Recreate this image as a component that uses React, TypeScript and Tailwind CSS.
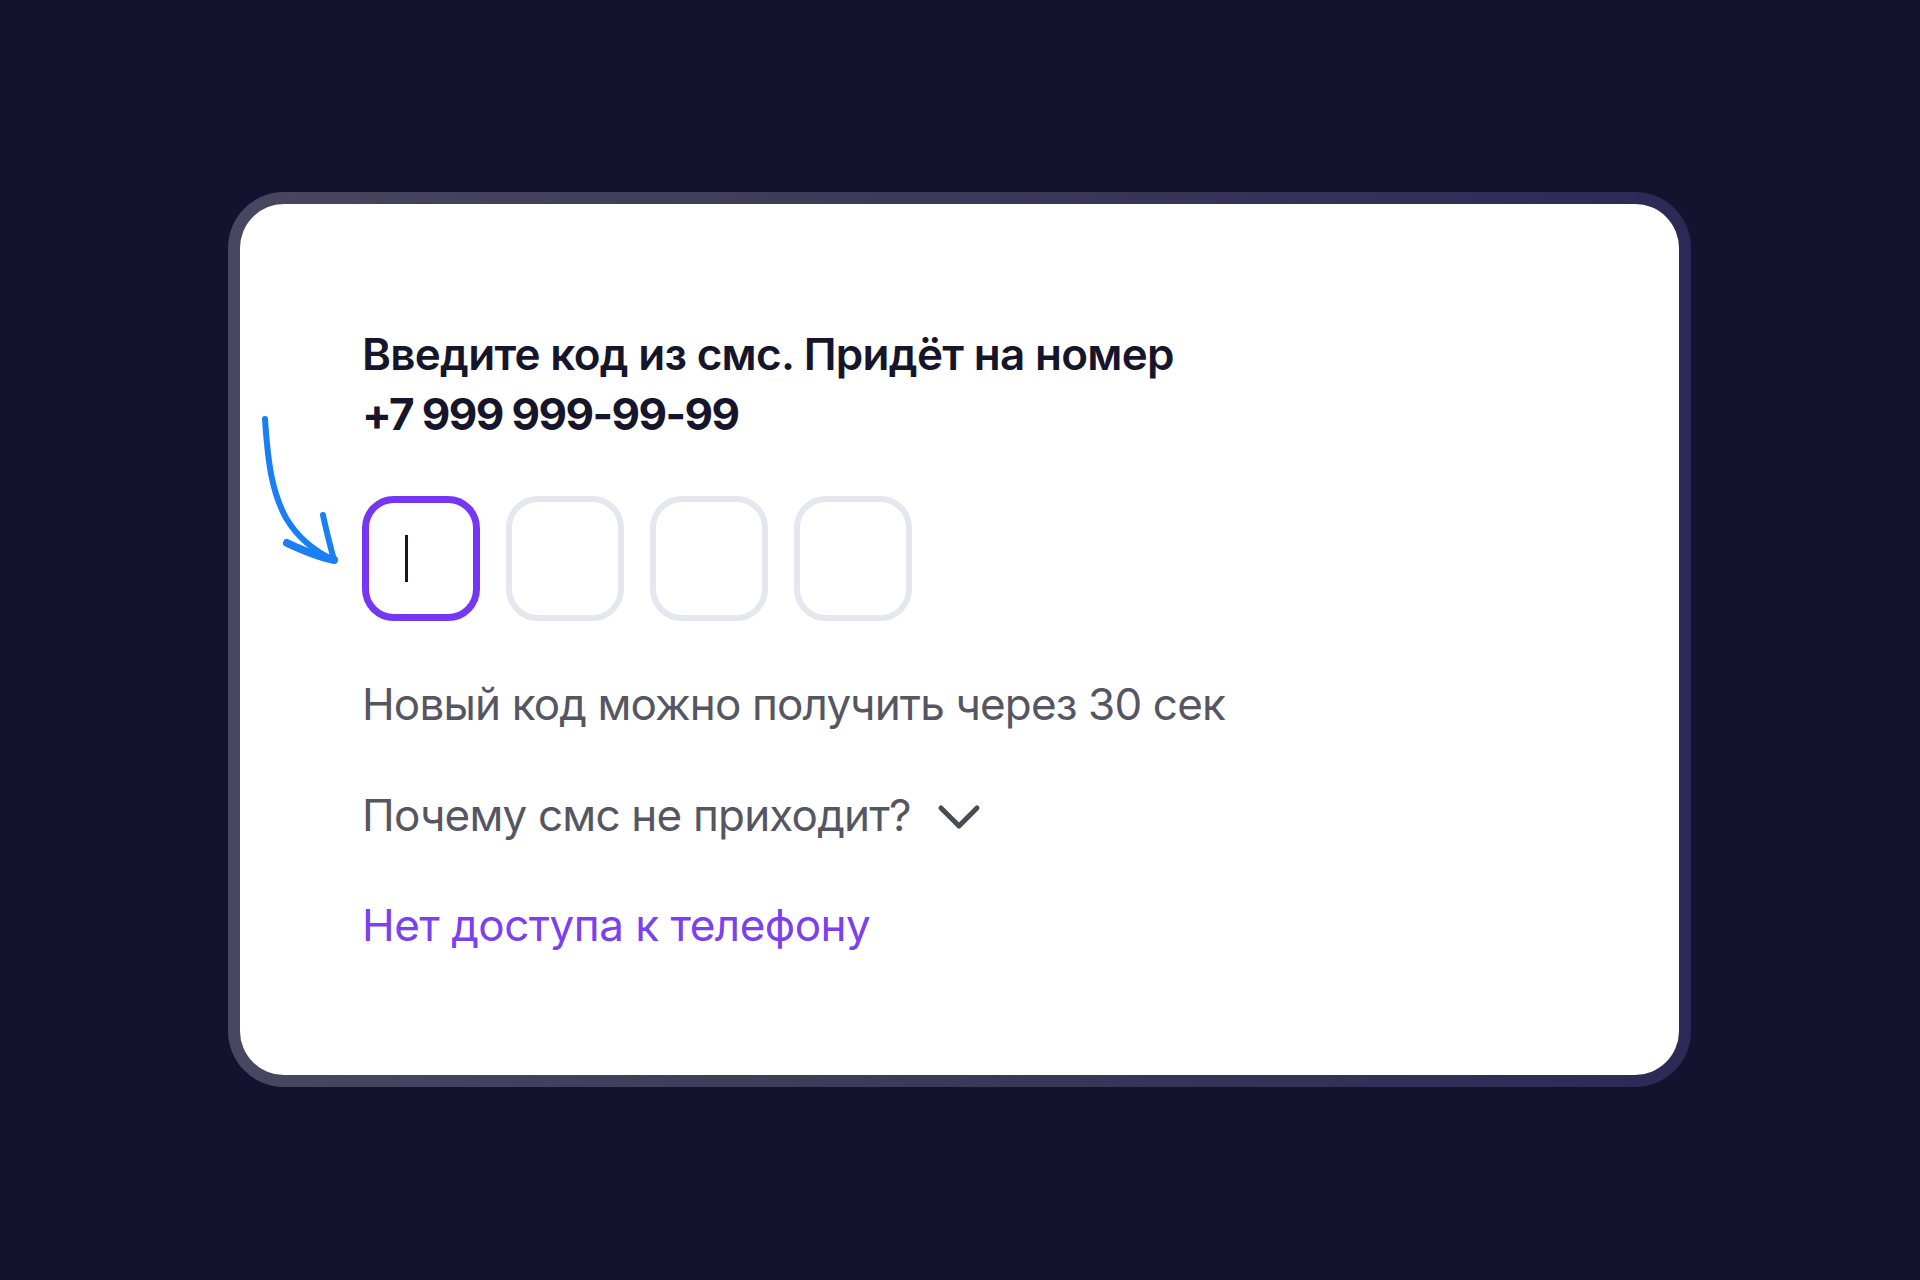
import React from "react";

function Arrow() {
  return (
    <svg
      className="absolute left-[20px] top-[210px]"
      width="110"
      height="160"
      viewBox="0 0 110 160"
      fill="none"
    >
      <path
        d="M5 5 C 8 50, 12 78, 26 104 C 38 124, 56 138, 74 146"
        stroke="#1a7ff2"
        strokeWidth="6"
        strokeLinecap="round"
      />
      <path
        d="M27 129 C 42 136, 58 143, 74 146"
        stroke="#1a7ff2"
        strokeWidth="8"
        strokeLinecap="round"
      />
      <path
        d="M63 101 C 66 116, 70 131, 74 146"
        stroke="#1a7ff2"
        strokeWidth="6"
        strokeLinecap="round"
      />
    </svg>
  );
}

export default function App() {
  const font = { fontFamily: "Inter, 'Noto Sans', sans-serif" };
  return (
    <div
      className="w-[1920px] h-[1280px] bg-[#14132f] pt-[192px] pl-[228px]"
      style={font}
    >
      <div className="w-[1463px] h-[895px] rounded-[56px] bg-gradient-to-r from-[#48475f] via-[#3a3958] to-[#2b2a55] p-[12px]">
        <div className="relative w-[1439px] h-[871px] rounded-[44px] bg-white pl-[122px] pt-[120px]">
          <Arrow />
          <div className="text-[44px] leading-[60px] font-semibold text-[#16152b]">
            <div className="tracking-[-0.7px]">Введите код из смс. Придёт на номер</div>
            <div className="font-bold tracking-[-1.6px]">+7 999 999-99-99</div>
          </div>
          <div className="mt-[52px] flex gap-[26px]">
            <div className="w-[118px] h-[125px] rounded-[32px] border-[7px] border-[#7637f5] flex items-center pl-[36px]">
              <div className="w-[3px] h-[47px] bg-[#16152b]" />
            </div>
            <div className="w-[118px] h-[125px] rounded-[32px] border-[6px] border-[#e6e6ee]" />
            <div className="w-[118px] h-[125px] rounded-[32px] border-[6px] border-[#e6e6ee]" />
            <div className="w-[118px] h-[125px] rounded-[32px] border-[6px] border-[#e6e6ee]" />
          </div>
          <div className="mt-[53px] text-[44px] leading-[60px] text-[#565662] tracking-[-0.85px]">
            Новый код можно получить через 30 сек
          </div>
          <div className="mt-[51px] flex items-center text-[44px] leading-[60px] text-[#565662] tracking-[-0.8px]">
            <span>Почему смс не приходит?</span>
            <svg
              className="ml-[26px] mt-[4px]"
              width="44"
              height="30"
              viewBox="0 0 44 30"
              fill="none"
            >
              <path
                d="M4 6 L22 24 L40 6"
                stroke="#4a4a55"
                strokeWidth="5"
                strokeLinecap="round"
                strokeLinejoin="round"
              />
            </svg>
          </div>
          <div className="mt-[50px] text-[44px] leading-[60px] text-[#7a40f2] tracking-[-0.5px]">
            Нет доступа к телефону
          </div>
        </div>
      </div>
    </div>
  );
}
